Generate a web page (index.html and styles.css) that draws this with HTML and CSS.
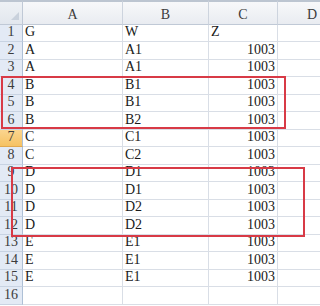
FILE: index.html
```html
<!DOCTYPE html>
<html>
<head>
<meta charset="utf-8">
<link rel="stylesheet" href="styles.css">
</head>
<body>
<div class="wrap">
  <div class="sheet">
    <div class="corner"><span class="tri"></span></div>
    <div class="ch">A</div><div class="ch">B</div><div class="ch">C</div><div class="ch">D</div>

    <div class="rh">1</div><div class="c">G</div><div class="c">W</div><div class="c">Z</div><div class="c"></div>
    <div class="rh">2</div><div class="c">A</div><div class="c">A1</div><div class="c n">1003</div><div class="c"></div>
    <div class="rh">3</div><div class="c">A</div><div class="c">A1</div><div class="c n">1003</div><div class="c"></div>
    <div class="rh">4</div><div class="c">B</div><div class="c">B1</div><div class="c n">1003</div><div class="c"></div>
    <div class="rh">5</div><div class="c">B</div><div class="c">B1</div><div class="c n">1003</div><div class="c"></div>
    <div class="rh">6</div><div class="c">B</div><div class="c">B2</div><div class="c n">1003</div><div class="c"></div>
    <div class="rh sel">7</div><div class="c">C</div><div class="c">C1</div><div class="c n">1003</div><div class="c"></div>
    <div class="rh">8</div><div class="c">C</div><div class="c">C2</div><div class="c n">1003</div><div class="c"></div>
    <div class="rh">9</div><div class="c">D</div><div class="c">D1</div><div class="c n">1003</div><div class="c"></div>
    <div class="rh">10</div><div class="c">D</div><div class="c">D1</div><div class="c n">1003</div><div class="c"></div>
    <div class="rh">11</div><div class="c">D</div><div class="c">D2</div><div class="c n">1003</div><div class="c"></div>
    <div class="rh">12</div><div class="c">D</div><div class="c">D2</div><div class="c n">1003</div><div class="c"></div>
    <div class="rh">13</div><div class="c">E</div><div class="c">E1</div><div class="c n">1003</div><div class="c"></div>
    <div class="rh">14</div><div class="c">E</div><div class="c">E1</div><div class="c n">1003</div><div class="c"></div>
    <div class="rh">15</div><div class="c">E</div><div class="c">E1</div><div class="c n">1003</div><div class="c"></div>
    <div class="rh">16</div><div class="c"></div><div class="c"></div><div class="c"></div><div class="c"></div>
  </div>
  <div class="mark mark-1"></div>
  <div class="mark mark-2"></div>
</div>
</body>
</html>
```

FILE: styles.css
```css
html, body {
  margin: 0;
  padding: 0;
  background: #ffffff;
  overflow: hidden;
}

.wrap {
  position: relative;
  width: 320px;
  height: 306px;
  overflow: hidden;
}

.sheet {
  display: grid;
  grid-template-columns: 23px 100px 86px 69px 69px;
  grid-template-rows: 25px repeat(8, 17px 18px);
  font-family: "Liberation Serif", "Times New Roman", serif;
  font-size: 14px;
  color: #1a1a1a;
}

.sheet > div {
  box-sizing: border-box;
  display: flex;
  align-items: flex-end;
  line-height: 14px;
  padding-bottom: 2px;
  white-space: nowrap;
  overflow: hidden;
}

.corner {
  position: relative;
  border-top: 2px solid #bcc5d1;
  border-right: 1px solid #c0c9d6;
  border-bottom: 1px solid #c0c9d6;
  background: linear-gradient(#eef1f5, #e2e7ee);
}

.tri {
  position: absolute;
  right: 3px;
  bottom: 4px;
  width: 0;
  height: 0;
  border-left: 8px solid transparent;
  border-bottom: 8px solid #c9d1dc;
}

.ch {
  justify-content: center;
  border-top: 2px solid #bcc5d1;
  border-right: 1px solid #cdd4de;
  border-bottom: 1px solid #c0c9d6;
  background: linear-gradient(#f7f8fa, #e9ecf1);
  color: #3c3c3c;
}

.rh {
  justify-content: center;
  background: #e3eaf5;
  border-right: 1px solid #aec0d6;
  border-bottom: 1px solid #c8d3e2;
  color: #3c3c3c;
}

.rh.sel {
  background: linear-gradient(#fbd58f, #f6c263);
  border-bottom-color: #e1a84e;
}

.c {
  padding-left: 2px;
  border-right: 1px solid #d9dee6;
  border-bottom: 1px solid #d9dee6;
}

.c.n {
  justify-content: flex-end;
  padding-left: 0;
  padding-right: 2px;
}

.mark {
  position: absolute;
  box-sizing: border-box;
  border: 2px solid #d83a46;
}

.mark-1 {
  left: 1px;
  top: 76px;
  width: 285px;
  height: 53px;
}

.mark-2 {
  left: 11px;
  top: 167px;
  width: 294px;
  height: 70px;
}
```
